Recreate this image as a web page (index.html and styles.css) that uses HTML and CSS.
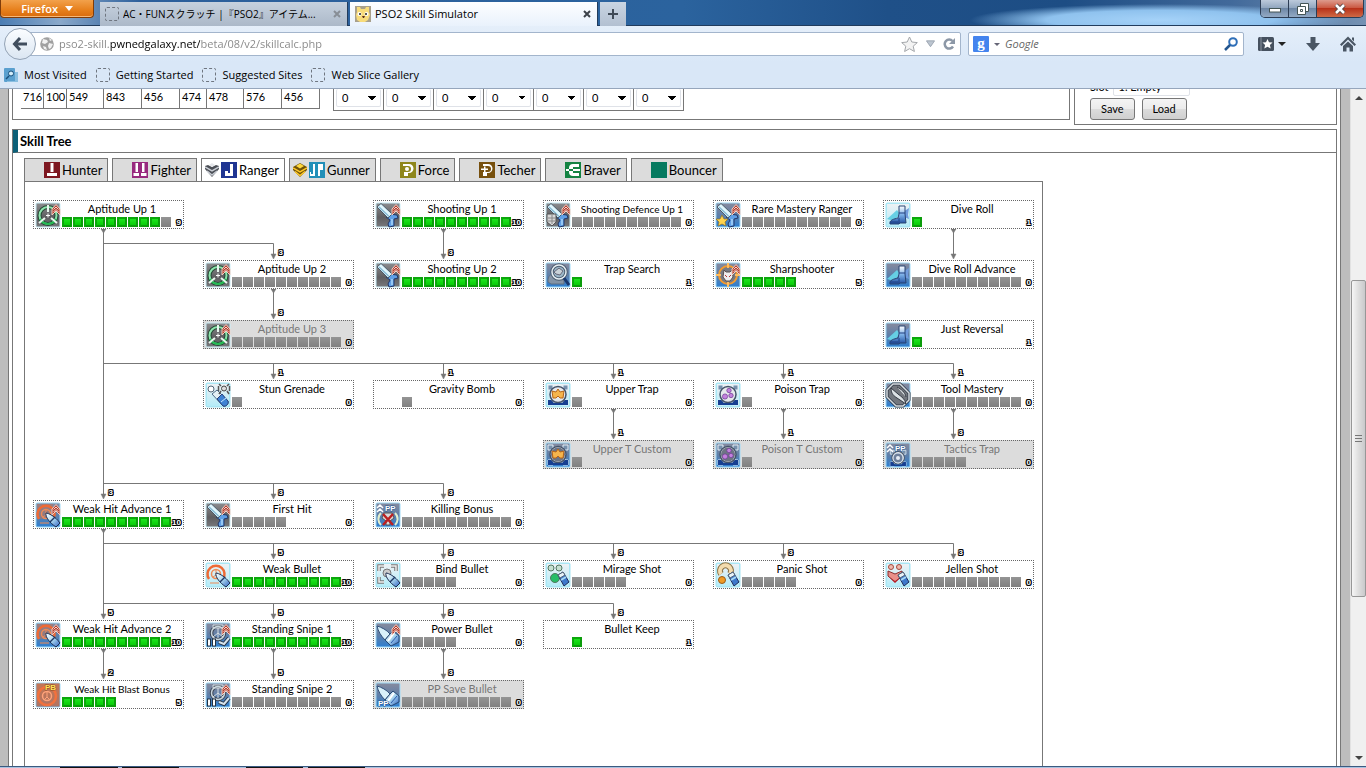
FILE: index.html
```html
<!DOCTYPE html>
<html lang="en">
<head>
<meta charset="utf-8">
<title>PSO2 Skill Simulator</title>
<link rel="stylesheet" href="styles.css">
</head>
<body>
<svg class="defs" aria-hidden="true">
  <defs>
    <linearGradient id="g-gray" x2="0" y2="1"><stop offset="0" stop-color="#8b8b8d"/><stop offset=".6" stop-color="#5d5d60"/><stop offset="1" stop-color="#77777a"/></linearGradient>
    <linearGradient id="g-blue" x2="0" y2="1"><stop offset="0" stop-color="#858a9e"/><stop offset=".5" stop-color="#5f7fa8"/><stop offset="1" stop-color="#2f7fd0"/></linearGradient>
    <linearGradient id="g-light" x2="0" y2="1"><stop offset="0" stop-color="#edf1f4"/><stop offset="1" stop-color="#b5ecf8"/></linearGradient>
    <linearGradient id="g-steel" x2="1" y2="1"><stop offset="0" stop-color="#fff"/><stop offset=".5" stop-color="#a9d6ee"/><stop offset="1" stop-color="#2a5cc0"/></linearGradient>
    <linearGradient id="g-boot" x2="0" y2="1"><stop offset="0" stop-color="#fff"/><stop offset=".5" stop-color="#79aee6"/><stop offset="1" stop-color="#1d4a9c"/></linearGradient>
    <g id="bg-gray"><rect x=".5" y=".5" width="25" height="25" rx="2" fill="#c9eef8"/><rect x="1.500" y="1.500" width="23" height="23" fill="url(#g-gray)"/></g>
    <g id="bg-blue"><rect x=".5" y=".5" width="25" height="25" rx="2" fill="#a2dcf8"/><rect x="1.500" y="1.500" width="23" height="23" fill="url(#g-blue)"/></g>
    <g id="bg-light"><rect x=".5" y=".5" width="25" height="25" rx="2" fill="#a9e6f4"/><rect x="2" y="2" width="22" height="22" fill="url(#g-light)"/></g>
    <g id="chev"><path d="M17 7 21 2.500 25 7V13L21 9 17 13Z" fill="#b5402f" stroke="#f3cfc4" stroke-width="1"/><path d="M18.500 7.500 21 5l2.500 2.500M18.500 10 21 7.500l2.500 2.500" fill="none" stroke="#fff" stroke-width=".8"/></g>
    <g id="gun"><path d="M14 12 22 13 23 16 19 17 19 24 14 25 13 22 15 18 11 15Z" fill="#5f9fe6" stroke="#22386a"/><path d="M17 17v6" stroke="#a9d6fa" stroke-width="1.500"/><path d="M2 5 6 1.500 17 12 13 16Z" fill="#dff5fb" stroke="#4a5a68"/><path d="M4 5 14 14.500" stroke="#86b9d3" stroke-width="1.500"/></g>
    <g id="bullet"><path d="M11 11c2 0 9 3 14 10l-4 4C15 21 10 15 11 11Z" fill="url(#g-steel)" stroke="#1d2f52"/><path d="m15 20 5-5" stroke="#1e3966" stroke-width="1.500"/></g>
    <g id="target" fill="none"><path d="M4 17a8.500 8.500 0 1 1 14 0" stroke="#ee6a35" stroke-width="2.500"/><circle cx="11" cy="12" r="4.500" stroke="#f08a55" stroke-width="1.500"/><path d="M11 8v5l-3 2m3-2 3 2M5 21h9" stroke="#f08a55"/></g>
    <g id="shell"><path d="m13 13 5-3 6 10-5 4Z" fill="#3d78cb" stroke="#1d2b5a"/><path d="m13 13 5-3 2 3-5 3Z" fill="#e8f3f8" stroke="#567"/><path d="m16 18 5-3" stroke="#a5d9f5" stroke-width="2"/></g>
    <g id="boot"><path d="m2 17 10-9 3 4-6 7Z" fill="#66cfe4"/><path d="M18 10l6-4-1 7 1 4-5-2Z" fill="#719bdd"/><path d="M14 4h6v8l1 9h-6l-1 1H5c-1-4 4-5 8-6l1-4Z" fill="url(#g-boot)" stroke="#294473"/><path d="M14 11h6M14 16v5M5 20h8" stroke="#1e3f83"/></g>
    <g id="trap"><path d="M3 3h5v3h10V3h5v5h-3v10h3v5h-5v-3H8v3H3v-5h3V8H3Z" fill="#7790ac" stroke="#e2eef6"/><path d="M3 18h3l3 3h8l3-3h3v5H3Z" fill="#173f91"/><circle cx="13" cy="12.500" r="8" fill="#e5e8eb" stroke="#45546a" stroke-width="1.500"/></g>
    <g id="star"><path d="m13 7 2 3 4-1-1 7h-3l-2-2-2 2H8L7 9l4 1Z" fill="#f5b54d" stroke="#b76518"/></g>
    <g id="bubbles" fill="#c381dd" stroke="#6b3b92" stroke-width=".7"><circle cx="14" cy="8.500" r="2.200"/><circle cx="10" cy="14.500" r="2.600"/><circle cx="16" cy="13.500" r="2.200"/></g>
    <g id="snipe" fill="none"><circle cx="13" cy="11" r="6.500" stroke="#3c4553" stroke-width="3.500"/><circle cx="13" cy="11" r="6.500" stroke="#c7d5dd" stroke-width="1.500"/><path d="M8 3h10v3H8ZM13 6v10M8 15l5-4 5 4" stroke="#d6dfe4"/><path d="m14 20 5 2 5-6" stroke="#263447" stroke-width="4"/><path d="m14 20 5 2 5-6" stroke="#d6e3ec" stroke-width="2"/><rect x="2.500" y="17" width="3" height="7" fill="#fff" stroke="#234"/><rect x="7.500" y="17" width="3" height="7" fill="#fff" stroke="#234"/></g>
    <g id="rounds"><path d="M2 4c4 1 10 4 13 8l-5 6C6 14 3 9 2 4Z" fill="#d9f1fa" stroke="#32527b"/><path d="m10 18 5-6 3-3 6 5v6l-8 4Z" fill="url(#g-steel)" stroke="#284974"/><path d="m13 19 6-8" fill="none" stroke="#fff" stroke-width="2"/><path d="m16 21 6-7" stroke="#2a5cae"/></g>

    <symbol id="i-apt" viewBox="0 0 26 26"><use href="#bg-gray"/><circle cx="13" cy="13.500" r="8.500" fill="none" stroke="#254a35" stroke-width="4"/><circle cx="13" cy="13.500" r="8.500" fill="none" stroke="#8de5ad" stroke-width="2"/><path d="M5 17a9 9 0 0 0 16 0" fill="none" stroke="#23b852" stroke-width="2"/><path d="M13 3v7M4 21l6-5m12 5-6-5" stroke="#e9f7ee" stroke-width="2"/><path d="M11 13.500h4m-2-2v4" stroke="#fff"/><use href="#chev"/></symbol>
    <symbol id="i-gun" viewBox="0 0 26 26"><use href="#bg-gray"/><use href="#gun"/><use href="#chev"/></symbol>
    <symbol id="i-def" viewBox="0 0 26 26"><use href="#bg-gray"/><use href="#gun"/><use href="#chev"/><path d="M2 12h9v8l-4 4-5-4Z" fill="#d7d7d7" stroke="#555"/><path d="M3 16h8m-8 3h8M7 13v9" stroke="#888"/></symbol>
    <symbol id="i-rare" viewBox="0 0 26 26"><use href="#bg-blue"/><use href="#gun"/><use href="#chev"/><path d="m7 13 2 4h4l-3 3 1 4-4-2-4 2 1-4-3-3h4Z" fill="#ffd34d" stroke="#8c7328" stroke-width=".7"/></symbol>
    <symbol id="i-search" viewBox="0 0 26 26"><use href="#bg-blue"/><path d="M3 20c-1-9 8-11 16-9v11H6Z" fill="#8393a5" stroke="#5d6e83"/><circle cx="14" cy="10" r="7" fill="#9bb7c8" stroke="#4c5e70" stroke-width="3.500"/><circle cx="14" cy="10" r="7" fill="none" stroke="#e6eef2" stroke-width="1.500"/><path d="M9 10l5-4 4 3-3 4-4-1Z" fill="#c9d3d9" stroke="#667"/><path d="m19 16 5 7" stroke="#19386e" stroke-width="3"/></symbol>
    <symbol id="i-sharp" viewBox="0 0 26 26"><use href="#bg-blue"/><circle cx="13" cy="13" r="9" fill="#777a83" stroke="#f39a2d" stroke-width="2"/><path d="M13 1v5m0 14v5M1 13h5m14 0h5" stroke="#ffbd5e" stroke-width="2"/><path d="m9 8 2 2h4l2-2 1 7-3 4h-4l-3-4Z" fill="#eee" stroke="#5b514e"/><path d="m10 13 2 2m4-2-2 2" stroke="#b33"/><use href="#chev"/></symbol>
    <symbol id="i-roll" viewBox="0 0 26 26"><use href="#bg-light"/><use href="#boot"/></symbol>
    <symbol id="i-boot" viewBox="0 0 26 26"><use href="#bg-blue"/><use href="#boot"/></symbol>
    <symbol id="i-stun" viewBox="0 0 26 26"><use href="#bg-light"/><circle cx="6" cy="7" r="3" fill="#fff" stroke="#567"/><path d="m7 12 5-4 11 11c1 3-2 6-5 5Z" fill="#e4f0f5" stroke="#4e6b88"/><path d="m12 17 5-5 6 7c1 3-2 6-5 5Z" fill="#3f83d4" stroke="#2b427c"/><path d="m16 20 5-4" stroke="#c9eaff"/><circle cx="19" cy="6.500" r="2.500" fill="#ddd" stroke="#444"/><path d="m14 2 2 2m8-2-2 2m-8 8 2-3m8 3-2-3M13.500 4v5m11-5v5" stroke="#555" stroke-width="1.500"/></symbol>
    <symbol id="i-trap" viewBox="0 0 26 26"><use href="#bg-light"/><use href="#trap"/><use href="#star"/></symbol>
    <symbol id="i-trapc" viewBox="0 0 26 26"><use href="#bg-blue"/><use href="#trap"/><circle cx="13" cy="12.500" r="7" fill="#6d7484"/><use href="#star"/></symbol>
    <symbol id="i-poi" viewBox="0 0 26 26"><use href="#bg-light"/><use href="#trap"/><use href="#bubbles"/></symbol>
    <symbol id="i-poic" viewBox="0 0 26 26"><use href="#bg-blue"/><use href="#trap"/><circle cx="13" cy="12.500" r="7" fill="#6d7484"/><use href="#bubbles"/></symbol>
    <symbol id="i-tool" viewBox="0 0 26 26"><use href="#bg-blue"/><path d="M8 2 2 8v7l9 9h7l6-6v-7l-9-9Z" fill="#73777e" stroke="#2f3742" stroke-width="3"/><path d="M8 2 2 8v7l9 9h7l6-6v-7l-9-9Z" fill="none" stroke="#d6dde2" stroke-width="1.500"/><path d="M6 6c0 6 3 8 6 10l9 6c-1-5-4-7-8-10ZM12 5c4 2 8 5 9 10" fill="#dde2e5" stroke="#343a44"/></symbol>
    <symbol id="i-tac" viewBox="0 0 26 26"><use href="#bg-blue"/><use href="#trap" transform="translate(3 6) scale(.78)"/><circle cx="13" cy="16" r="5" fill="#6d7f9b" stroke="#dce9f4"/><circle cx="13" cy="16" r="2" fill="#e5edf5"/><path d="M2 6 5 3l3 3M2 10l3-3 3 3" fill="none" stroke="#fff" stroke-width="1.500"/><text x="10" y="9" class="ico-text">PP</text></symbol>
    <symbol id="i-weak" viewBox="0 0 26 26"><use href="#bg-blue"/><rect x="2" y="2" width="16" height="15" fill="#b8735f" opacity=".5"/><use href="#target"/><use href="#bullet"/><use href="#chev"/></symbol>
    <symbol id="i-kill" viewBox="0 0 26 26"><use href="#bg-blue"/><path d="M6 11c-4 4-3 9 0 12M20 11c4 4 3 9 0 12" fill="none" stroke="#e2efce" stroke-width="2"/><path d="M9 11h8l2 5-4 3v4h-4v-4l-4-3Z" fill="#d9d9d9" stroke="#555"/><path d="m8 12 10 11m0-11L8 23" stroke="#bd2020" stroke-width="2.500"/><path d="M2 6 5 3l3 3M2 10l3-3 3 3" fill="none" stroke="#fff" stroke-width="1.500"/><text x="10" y="9" class="ico-text">PP</text></symbol>
    <symbol id="i-wb" viewBox="0 0 26 26"><use href="#bg-light"/><use href="#target"/><use href="#bullet"/></symbol>
    <symbol id="i-bind" viewBox="0 0 26 26"><use href="#bg-light"/><path d="M4 9V4h5m7 0h5v5M4 15v5h5" fill="none" stroke="#777" stroke-width="3.500"/><path d="M4 9V4h5m7 0h5v5M4 15v5h5" fill="none" stroke="#eee" stroke-width="1.500"/><circle cx="12" cy="11" r="4" fill="#ccc" stroke="#777"/><use href="#bullet"/></symbol>
    <symbol id="i-mir" viewBox="0 0 26 26"><use href="#bg-light"/><g stroke="#527761"><circle cx="6" cy="6" r="3" fill="#c6dfd0"/><circle cx="14" cy="6" r="3" fill="#c6dfd0"/><circle cx="10" cy="16" r="4.500" fill="#27bd66"/></g><use href="#shell"/></symbol>
    <symbol id="i-pan" viewBox="0 0 26 26"><use href="#bg-light"/><path d="M6 12a5.500 5.500 0 1 1 9 0" fill="none" stroke="#8d7448" stroke-width="6"/><path d="M6 12a5.500 5.500 0 1 1 9 0" fill="none" stroke="#f3dcae" stroke-width="4"/><circle cx="7" cy="18" r="3.500" fill="#f09b25" stroke="#9a5b18"/><use href="#shell"/></symbol>
    <symbol id="i-jel" viewBox="0 0 26 26"><use href="#bg-light"/><circle cx="6" cy="5" r="2.500" fill="#f1b9ac" stroke="#a34a3f"/><circle cx="14" cy="5" r="2.500" fill="#f1b9ac" stroke="#a34a3f"/><path d="m3 9 7 3 7-3v5l-7 6-7-6Z" fill="#e98f89" stroke="#8a2f30"/><path d="m4 15 6 4 6-4-6 6Z" fill="#b51f2a"/><use href="#shell"/></symbol>
    <symbol id="i-snipe" viewBox="0 0 26 26"><use href="#bg-blue"/><use href="#snipe"/><use href="#chev"/></symbol>
    <symbol id="i-pow" viewBox="0 0 26 26"><use href="#bg-blue"/><use href="#rounds"/><use href="#chev"/></symbol>
    <symbol id="i-pps" viewBox="0 0 26 26"><use href="#bg-blue"/><use href="#rounds"/><text x="3" y="24" class="ico-text">PP</text></symbol>
    <symbol id="i-blast" viewBox="0 0 26 26"><use href="#bg-blue"/><rect x="1.500" y="1.500" width="23" height="23" fill="#d9703f" opacity=".75"/><circle cx="12" cy="14" r="9" fill="none" stroke="#f2713d" stroke-width="2.500"/><circle cx="12" cy="14" r="4.500" fill="none" stroke="#ffa37a" stroke-width="1.500"/><path d="M12 10v5m0 0-3 3m3-3 3 3" stroke="#ffa37a"/><text x="10" y="8" class="ico-text gold">PB</text></symbol>
  </defs>
</svg>

<header class="chrome">
  <div class="titlebar">
    <button class="firefox" type="button">Firefox <i class="tri"></i></button>
    <div class="btabs">
      <div class="btab">
        <i class="blank"></i><span class="btab-title cjk">AC・FUNスクラッチ |『PSO2』アイテム...</span>
        <button class="x" type="button" aria-label="Close tab"><svg viewBox="0 0 8 8"><path d="m1 1 6 6m0-6L1 7"/></svg></button>
      </div>
      <div class="btab active">
        <svg class="fav" viewBox="0 0 16 16"><rect width="16" height="16" fill="#a8a08c"/><path d="M2 1h3l1 2h4l1-2h3v5l1 3-2 5-3 2H5l-3-2-1-5 1-3Z" fill="#f8dc7b"/><circle cx="4.500" cy="8" r="2" fill="#fff"/><circle cx="11.500" cy="8" r="2" fill="#fff"/><circle cx="5" cy="8" r="1" fill="#222"/><circle cx="11" cy="8" r="1" fill="#222"/><path d="M7 10h3l-1 2H8Z" fill="#5b2d1a"/></svg>
        <span class="btab-title">PSO2 Skill Simulator</span>
        <button class="x" type="button" aria-label="Close tab"><svg viewBox="0 0 8 8"><path d="m1 1 6 6m0-6L1 7"/></svg></button>
      </div>
      <button class="newtab" type="button" aria-label="New tab"><svg viewBox="0 0 10 10"><path d="M5 0v10M0 5h10"/></svg></button>
    </div>
    <div class="winbtns">
      <button class="wb" type="button" aria-label="Minimize"><svg viewBox="0 0 14 14"><rect x="1.500" y="6.500" width="11" height="3.500" fill="#fff" stroke="#455"/></svg></button>
      <button class="wb" type="button" aria-label="Restore"><svg viewBox="0 0 14 14"><path d="M4.500 1.500h8v8h-8Z" fill="#fff" stroke="#455"/><path d="M1.500 4.500h8v8h-8ZM4.500 7.500h2v2h-2Z" fill="#fff" stroke="#455"/></svg></button>
      <button class="wb close" type="button" aria-label="Close"><svg viewBox="0 0 14 14"><path d="m3 3 8 8m0-8-8 8" stroke="#544" stroke-width="4.500"/><path d="m3 3 8 8m0-8-8 8" stroke="#fff" stroke-width="2.500"/></svg></button>
    </div>
  </div>
  <div class="navbar">
    <button class="back" type="button" aria-label="Back"><svg viewBox="0 0 16 16"><path d="M8 2 2.500 8 8 14M3 8h12" fill="none" stroke="#414e5e" stroke-width="3"/></svg></button>
    <div class="urlbar">
      <svg class="globe" viewBox="0 0 14 14"><circle cx="7" cy="7" r="6.800" fill="#a0a0a0"/><path d="M3 2l4 1 1 2-3 2-3-1ZM9 6l4 1-2 4-2 1-1-3ZM3 9l3 1 1 3-3-1ZM9 1l3 2-2 1Z" fill="#f1f1f1"/></svg>
      <input class="url" type="text" aria-label="Address" value="pso2-skill.pwnedgalaxy.net/beta/08/v2/skillcalc.php">
      <svg class="i17" viewBox="0 0 17 17"><path d="m8.500 1 2.300 5 5.500.6-4.100 3.600 1.200 5.300-4.900-2.800-4.900 2.800 1.200-5.300L.7 6.600l5.500-.6Z" fill="#f3f3f3" stroke="#a4a7ab"/></svg>
      <svg class="i9" viewBox="0 0 10 8"><path d="M.5.500h9L5 7Z" fill="#bcc5d0" stroke="#98a2ae"/></svg>
      <svg class="i12" viewBox="0 0 12 12"><path d="M9.500 3A4.500 4.500 0 1 0 10 8.500" fill="none" stroke="#8d98a7" stroke-width="2.500"/><path d="M12 0v6H6Z" fill="#8d98a7"/></svg>
    </div>
    <div class="search">
      <svg class="i16" viewBox="0 0 16 16"><rect width="16" height="16" rx="1" fill="#4484ee"/><text x="8" y="12" class="gletter">g</text></svg>
      <i class="tri small"></i>
      <input class="q" type="text" placeholder="Google" aria-label="Search">
      <svg class="i14" viewBox="0 0 14 14"><circle cx="9" cy="5" r="3.800" fill="none" stroke="#2f6fb8" stroke-width="2"/><path d="M6 8 1 13" stroke="#23568f" stroke-width="2.500"/></svg>
    </div>
    <div class="tools">
      <button type="button" aria-label="Bookmarks"><svg class="i16" viewBox="0 0 16 14"><rect width="16" height="14" rx="1.500" fill="#46515f"/><path d="M3 0v14" stroke="#8a94a0"/><path d="m9.500 2 1.500 3.200 3.500.4-2.600 2.400.8 3.500-3.200-1.800-3.200 1.800.8-3.500L4.500 5.600 8 5.200Z" fill="#fff"/></svg><i class="tri dark"></i></button>
      <button type="button" aria-label="Downloads"><svg class="i14" viewBox="0 0 14 14"><path d="M4.500 0h5v6H14l-7 8-7-8h4.500Z" fill="#4a5664"/></svg></button>
      <button type="button" aria-label="Home"><svg class="i16" viewBox="0 0 16 15"><path d="M0 8 8 0l8 8-1.500 1.500L8 3 1.500 9.500Z" fill="#4a5664"/><path d="M3 9.500 8 5l5 4.500V15H9.500v-4h-3v4H3ZM12 1h2v4l-2-2Z" fill="#4a5664"/></svg></button>
    </div>
  </div>
  <nav class="bookmarks">
    <a href="#"><svg class="i14" viewBox="0 0 14 14"><rect width="11" height="14" rx="1" fill="#5aa0cf"/><path d="M11 4h3v10H3v-1h8Z" fill="#8bbfe0"/><circle cx="7" cy="5.500" r="2.500" fill="#d3edfa" stroke="#184f7c"/><path d="m5 8-3 3" stroke="#184f7c" stroke-width="1.500"/></svg>Most Visited</a>
    <a href="#"><i class="blank"></i>Getting Started</a>
    <a href="#"><i class="blank"></i>Suggested Sites</a>
    <a href="#"><i class="blank"></i>Web Slice Gallery</a>
  </nav>
</header>

<div class="viewport">
  <main class="page">
    <div class="top">
      <section class="panel stats-panel">
        <table class="stats"><tr><td>716</td><td>100</td><td class="m">549</td><td class="l">843</td><td class="l">456</td><td class="s">474</td><td class="m">478</td><td class="l">576</td><td class="l">456</td></tr></table>
        <table class="picks"><tr>
          <td><select aria-label="Value 1"><option>0</option></select></td>
          <td><select aria-label="Value 2"><option>0</option></select></td>
          <td><select aria-label="Value 3"><option>0</option></select></td>
          <td><select aria-label="Value 4"><option>0</option></select></td>
          <td><select aria-label="Value 5"><option>0</option></select></td>
          <td><select aria-label="Value 6"><option>0</option></select></td>
          <td><select aria-label="Value 7"><option>0</option></select></td>
        </tr></table>
      </section>
      <section class="panel save-panel">
        <div class="slot"><label for="slot">Slot</label><select id="slot"><option>1. Empty</option></select></div>
        <div class="actions"><button type="button">Save</button><button type="button">Load</button></div>
      </section>
    </div>

    <section class="panel tree-panel">
      <h2>Skill Tree</h2>
      <div class="tree-body">
        <div class="tabs" role="tablist">
          <button role="tab" type="button"><i class="rank"></i><svg class="i16" viewBox="0 0 16 16"><rect width="16" height="16" fill="#7d1720"/><path d="M6.500 1h3v9h-3ZM3 11h10v3H3Z" fill="#fff"/></svg>Hunter</button>
          <button role="tab" type="button"><i class="rank"></i><svg class="i16" viewBox="0 0 16 16"><rect width="16" height="16" fill="#98297f"/><path d="M3.500 1H6v9H3.500ZM10 1h2.500v9H10ZM1.500 11h5.500v3H1.500ZM9 11h5.500v3H9Z" fill="#fff"/></svg>Fighter</button>
          <button role="tab" type="button" class="on" aria-selected="true"><svg class="rank" viewBox="0 0 14 14"><path d="M0 3 3 2l4 2 4-2 3 1v3l-7 8-7-8Z" fill="#4b4f56"/><path d="m4 2 3-2 3 2-3 2Z" fill="#e4e6ea"/><path d="M0 4l7 4 7-4M2 8l5 4 5-4" fill="none" stroke="#c9cdd4" stroke-width="1.500"/></svg><svg class="i16" viewBox="0 0 16 16"><rect width="16" height="16" fill="#1f3592"/><path d="M9 2h3v12H4v-5h3v2h2Z" fill="#fff"/></svg>Ranger</button>
          <button role="tab" type="button"><svg class="rank" viewBox="0 0 14 14"><path d="M0 4 7 0l7 4v3l-7 7-7-7Z" fill="#6f5208"/><path d="m3 3 4-2.500L11 3 7 5.500Z" fill="#ffd83d"/><path d="M0 5l7 4 7-4M2 8.500l5 4 5-4" fill="none" stroke="#ffc928" stroke-width="1.500"/></svg><svg class="i16" viewBox="0 0 16 16"><rect width="16" height="16" fill="#228fb8"/><path d="M4 2h2v12H1v-4h1v2h2ZM9 2h5v6h-3v6H9Z" fill="#fff"/></svg>Gunner</button>
          <button role="tab" type="button"><i class="rank"></i><svg class="i16" viewBox="0 0 16 16"><rect width="16" height="16" fill="#8f861b"/><path d="M3 2h6a4.500 4.500 0 0 1 0 9H8v3H4v-4h4a3 3 0 0 0 0-6H3Z" fill="#fff"/><circle cx="7" cy="7" r="2" fill="#fff"/></svg>Force</button>
          <button role="tab" type="button"><i class="rank"></i><svg class="i16" viewBox="0 0 16 16"><rect width="16" height="16" fill="#77500e"/><path d="M4 2h5a4.500 4.500 0 0 1 0 9H8v3H4v-4h5a3 3 0 0 0 0-6H4ZM2 6.500h7v1.500H2ZM5 4.500h1.500V10H5Z" fill="#fff"/></svg>Techer</button>
          <button role="tab" type="button"><i class="rank"></i><svg class="i16" viewBox="0 0 16 16"><rect width="16" height="16" fill="#148342"/><path d="M14 2H8a4 4 0 0 0-4 4v4a4 4 0 0 0 4 4h6v-3H8V5h6ZM1 7h14v2H1Z" fill="#fff"/></svg>Braver</button>
          <button role="tab" type="button"><i class="rank"></i><svg class="i16" viewBox="0 0 16 16"><rect width="16" height="16" fill="#067a60"/></svg>Bouncer</button>
        </div>

        <div class="tree">
          <div class="nodes">
            <svg class="links" width="1001" height="509" aria-hidden="true">
              <path d="M70.500 29V298M70.500 43.500H240.500V58M240.500 89V118M410.500 29V58M920.500 29V58M70.500 163.500H920.500V178M240.500 163V178M410.500 163V178M580.500 163V178M750.500 163V178M580.500 209V238M750.500 209V238M920.500 209V238M70.500 283.500H410.500V298M240.500 283V298M70.500 329V418M70.500 343.500H920.500V358M240.500 343V358M410.500 343V358M580.500 343V358M750.500 343V358M70.500 403.500H580.500V418M240.500 403V418M410.500 403V418M70.500 449V478M240.500 449V478M410.500 449V478" fill="none" stroke="#777"/>
              <path d="M68 29h5l-2.500 4ZM238 89h5l-2.500 4ZM408 29h5l-2.500 4ZM918 29h5l-2.500 4ZM578 209h5l-2.500 4ZM748 209h5l-2.500 4ZM918 209h5l-2.500 4ZM68 329h5l-2.500 4ZM68 449h5l-2.500 4ZM238 449h5l-2.500 4ZM408 449h5l-2.500 4ZM238 54h5l-2.500 5ZM238 114h5l-2.500 5ZM408 54h5l-2.500 5ZM918 54h5l-2.500 5ZM238 174h5l-2.500 5ZM408 174h5l-2.500 5ZM578 174h5l-2.500 5ZM748 174h5l-2.500 5ZM918 174h5l-2.500 5ZM578 234h5l-2.500 5ZM748 234h5l-2.500 5ZM918 234h5l-2.500 5ZM68 294h5l-2.500 5ZM238 294h5l-2.500 5ZM408 294h5l-2.500 5ZM238 354h5l-2.500 5ZM408 354h5l-2.500 5ZM578 354h5l-2.500 5ZM748 354h5l-2.500 5ZM918 354h5l-2.500 5ZM68 414h5l-2.500 5ZM238 414h5l-2.500 5ZM408 414h5l-2.500 5ZM578 414h5l-2.500 5ZM68 474h5l-2.500 5ZM238 474h5l-2.500 5ZM408 474h5l-2.500 5Z" fill="#777" stroke="#777" stroke-width=".5"/>
            </svg>

            <div class="skill c1 r1"><svg><use href="#i-apt"/></svg><b>Aptitude Up 1</b><i class="pips on n9"></i><i class="pips n1"></i><em>9</em></div>
            <div class="skill c3 r1"><svg><use href="#i-gun"/></svg><b>Shooting Up 1</b><i class="pips on n10"></i><em>10</em></div>
            <div class="skill c4 r1"><svg><use href="#i-def"/></svg><b class="long">Shooting Defence Up 1</b><i class="pips n10"></i><em>0</em></div>
            <div class="skill c5 r1"><svg><use href="#i-rare"/></svg><b>Rare Mastery Ranger</b><i class="pips n10"></i><em>0</em></div>
            <div class="skill c6 r1"><svg><use href="#i-roll"/></svg><b>Dive Roll</b><i class="pips on n1"></i><em>1</em></div>

            <div class="skill c2 r2"><span class="req">3</span><svg><use href="#i-apt"/></svg><b>Aptitude Up 2</b><i class="pips n10"></i><em>0</em></div>
            <div class="skill c3 r2"><span class="req">3</span><svg><use href="#i-gun"/></svg><b>Shooting Up 2</b><i class="pips on n10"></i><em>10</em></div>
            <div class="skill c4 r2"><svg><use href="#i-search"/></svg><b>Trap Search</b><i class="pips on n1"></i><em>1</em></div>
            <div class="skill c5 r2"><svg><use href="#i-sharp"/></svg><b>Sharpshooter</b><i class="pips on n5"></i><em>5</em></div>
            <div class="skill c6 r2"><svg><use href="#i-boot"/></svg><b>Dive Roll Advance</b><i class="pips n10"></i><em>0</em></div>

            <div class="skill off c2 r3"><span class="req">3</span><svg><use href="#i-apt"/></svg><b>Aptitude Up 3</b><i class="pips n10"></i><em>0</em></div>
            <div class="skill c6 r3"><svg><use href="#i-boot"/></svg><b>Just Reversal</b><i class="pips on n1"></i><em>1</em></div>

            <div class="skill c2 r4"><span class="req">1</span><svg><use href="#i-stun"/></svg><b>Stun Grenade</b><i class="pips n1"></i><em>0</em></div>
            <div class="skill c3 r4"><span class="req">1</span><b>Gravity Bomb</b><i class="pips n1"></i><em>0</em></div>
            <div class="skill c4 r4"><span class="req">1</span><svg><use href="#i-trap"/></svg><b>Upper Trap</b><i class="pips n1"></i><em>0</em></div>
            <div class="skill c5 r4"><span class="req">1</span><svg><use href="#i-poi"/></svg><b>Poison Trap</b><i class="pips n1"></i><em>0</em></div>
            <div class="skill c6 r4"><span class="req">1</span><svg><use href="#i-tool"/></svg><b>Tool Mastery</b><i class="pips n10"></i><em>0</em></div>

            <div class="skill off c4 r5"><span class="req">1</span><svg><use href="#i-trapc"/></svg><b>Upper T Custom</b><i class="pips n1"></i><em>0</em></div>
            <div class="skill off c5 r5"><span class="req">1</span><svg><use href="#i-poic"/></svg><b>Poison T Custom</b><i class="pips n1"></i><em>0</em></div>
            <div class="skill off c6 r5"><span class="req">3</span><svg><use href="#i-tac"/></svg><b>Tactics Trap</b><i class="pips n5"></i><em>0</em></div>

            <div class="skill c1 r6"><span class="req">3</span><svg><use href="#i-weak"/></svg><b>Weak Hit Advance 1</b><i class="pips on n10"></i><em>10</em></div>
            <div class="skill c2 r6"><span class="req">3</span><svg><use href="#i-gun"/></svg><b>First Hit</b><i class="pips n5"></i><em>0</em></div>
            <div class="skill c3 r6"><span class="req">3</span><svg><use href="#i-kill"/></svg><b>Killing Bonus</b><i class="pips n10"></i><em>0</em></div>

            <div class="skill c2 r7"><span class="req">5</span><svg><use href="#i-wb"/></svg><b>Weak Bullet</b><i class="pips on n10"></i><em>10</em></div>
            <div class="skill c3 r7"><span class="req">3</span><svg><use href="#i-bind"/></svg><b>Bind Bullet</b><i class="pips n5"></i><em>0</em></div>
            <div class="skill c4 r7"><span class="req">3</span><svg><use href="#i-mir"/></svg><b>Mirage Shot</b><i class="pips n5"></i><em>0</em></div>
            <div class="skill c5 r7"><span class="req">3</span><svg><use href="#i-pan"/></svg><b>Panic Shot</b><i class="pips n5"></i><em>0</em></div>
            <div class="skill c6 r7"><span class="req">3</span><svg><use href="#i-jel"/></svg><b>Jellen Shot</b><i class="pips n10"></i><em>0</em></div>

            <div class="skill c1 r8"><span class="req">5</span><svg><use href="#i-weak"/></svg><b>Weak Hit Advance 2</b><i class="pips on n10"></i><em>10</em></div>
            <div class="skill c2 r8"><span class="req">5</span><svg><use href="#i-snipe"/></svg><b>Standing Snipe 1</b><i class="pips on n10"></i><em>10</em></div>
            <div class="skill c3 r8"><span class="req">3</span><svg><use href="#i-pow"/></svg><b>Power Bullet</b><i class="pips n5"></i><em>0</em></div>
            <div class="skill c4 r8"><span class="req">3</span><b>Bullet Keep</b><i class="pips on n1"></i><em>1</em></div>

            <div class="skill c1 r9"><span class="req">2</span><svg><use href="#i-blast"/></svg><b class="long">Weak Hit Blast Bonus</b><i class="pips on n5"></i><em>5</em></div>
            <div class="skill c2 r9"><span class="req">5</span><svg><use href="#i-snipe"/></svg><b>Standing Snipe 2</b><i class="pips n10"></i><em>0</em></div>
            <div class="skill off c3 r9"><span class="req">3</span><svg><use href="#i-pps"/></svg><b>PP Save Bullet</b><i class="pips n10"></i><em>0</em></div>
          </div>
        </div>
      </div>
    </section>
  </main>
  <div class="scrollbar" aria-hidden="true">
    <i class="sb-arrow up"></i><i class="sb-before"></i><i class="sb-thumb"></i><i class="sb-after"></i><i class="sb-arrow"></i>
  </div>
</div>
<footer class="edge"></footer>
</body>
</html>
```
FILE: styles.css
```css
* { box-sizing: border-box; }
body {
  margin: 0;
  height: 100vh;
  display: flex;
  flex-direction: column;
  overflow: hidden;
  font: 11px/16px "Open Sans", "Noto Sans CJK JP", sans-serif;
  color: #000;
}
button, input, select { font: inherit; color: inherit; margin: 0; padding: 0; border: 0; background: none; }
.defs { position: absolute; width: 0; height: 0; }
svg { display: block; flex: none; }
.i9 { width: 9px; height: 8px; }
.i12 { width: 12px; height: 12px; }
.i14 { width: 14px; height: 14px; }
.i16 { width: 16px; height: 16px; }
.i17 { width: 17px; height: 17px; }
.tri { display: inline-block; border: 4px solid transparent; border-top: 5px solid #fff; border-bottom: 0; }
.tri.small { border-width: 3px; border-top: 3px solid #667; border-bottom: 0; }
.tri.dark { border-top: 4px solid #222; }
.blank { width: 14px; height: 14px; border: 1px dashed #6f7680; border-radius: 2px; flex: none; }

/* Browser window */
.titlebar {
  height: 26px;
  display: flex;
  align-items: flex-start;
  background:
    radial-gradient(ellipse 190px 16px at 1160px 20px, #a5d2f8, #8fc2ee 60%, transparent),
    linear-gradient(90deg, #4b7db3, #8aa9cb 60px, #2c5f9b 140px, #2b639e 50%, #1f5088 65%, #1d4d84 78%, #41699a 90%, #7592b3);
  border-bottom: 1px solid #213c5d;
}
.firefox {
  width: 94px;
  height: 18px;
  margin-right: 6px;
  border: 1px solid #7f3c0a;
  border-top: 0;
  border-radius: 0 0 4px 4px;
  background: linear-gradient(#f2a14b, #e67f1b 60%, #d96b0d);
  box-shadow: inset 0 -1px #f6b878;
  color: #fff;
  font-weight: 600;
  line-height: 16px;
}
.firefox .tri { margin: 0 0 2px 4px; }
.btabs { display: flex; gap: 2px; padding-top: 2px; flex: 1; }
.btab {
  width: 248px;
  height: 24px;
  padding: 0 6px 0 5px;
  display: flex;
  align-items: center;
  gap: 4px;
  background: linear-gradient(#c6d1de, #acb9c9);
  border-right: 1px solid #223c5c;
}
.btab.active { background: linear-gradient(#fdfeff, #e9f2fc); }
.btab-title { flex: 1; white-space: nowrap; overflow: hidden; }
.cjk { font-size: 10px; }
.fav { width: 16px; height: 16px; }
.x svg { width: 8px; height: 8px; }
.x path { stroke: #888e96; stroke-width: 2; }
.active .x path { stroke: #3c4249; }
.newtab { width: 26px; height: 24px; display: grid; place-items: center; background: linear-gradient(#c9d5e3, #b3c0d1); }
.newtab svg { width: 10px; height: 10px; }
.newtab path { stroke: #3f4a57; stroke-width: 2; }
.winbtns { display: flex; height: 18px; margin-right: 2px; border: 1px solid #2c3d55; border-top: 0; border-radius: 0 0 5px 5px; overflow: hidden; }
.wb { width: 28px; display: grid; place-items: center; border-right: 1px solid #2c3d55; background: linear-gradient(#bccadb, #92a7c0 45%, #6e87a6 50%, #93aac4); }
.wb svg { width: 14px; height: 14px; }
.wb.close { width: 46px; border: 0; background: linear-gradient(#dd9b8d, #cb5a43 45%, #b8321a 50%, #cf6a45); }

.chrome { background: linear-gradient(#edf4fc, #d9e7f7 62px); flex: none; border-bottom: 1px solid #96a6bc; }
.navbar { height: 36px; display: flex; align-items: center; padding-left: 4px; }
.back {
  width: 32px;
  height: 32px;
  border: 1px solid #94a3b5;
  border-radius: 50%;
  background: linear-gradient(#fbfdff, #dbe6f2);
  display: grid;
  place-items: center;
  z-index: 1;
}
.back svg { width: 16px; height: 16px; }
.urlbar, .search { height: 24px; display: flex; align-items: center; border: 1px solid #a3b5cc; background: #fff; border-radius: 2px; }
.urlbar { flex: 1; margin-left: -10px; padding: 0 5px 0 13px; gap: 8px; }
.globe { width: 14px; height: 14px; margin-right: -3px; }
.url {
  flex: 1;
  min-width: 0;
  outline: 0;
  background: linear-gradient(90deg, #858585 51px, #000 51px, #000 141px, #858585 141px);
  -webkit-background-clip: text;
  background-clip: text;
  -webkit-text-fill-color: transparent;
}
.search { width: 276px; margin-left: 7px; padding: 0 5px 0 4px; gap: 5px; }
.gletter { font: bold 15px "Liberation Serif", serif; fill: #fff; text-anchor: middle; }
.q { flex: 1; min-width: 0; outline: 0; }
.q::placeholder { color: #666; font-style: italic; opacity: 1; }
.tools { display: flex; align-items: center; gap: 20px; padding: 0 10px 0 14px; }
.tools button { display: flex; align-items: center; gap: 4px; }
.bookmarks { height: 26px; display: flex; align-items: center; gap: 9px; padding: 0 4px; }
.bookmarks a { display: flex; align-items: center; gap: 6px; color: #000; text-decoration: none; }

/* Page */
.viewport { flex: 1; min-height: 0; display: flex; background: #bdbdbd; }
.page {
  flex: 1;
  min-width: 0;
  margin: 0 9px 0 8px;
  padding: 0 3px;
  border: solid #777;
  border-width: 0 1px;
  background: #fff;
  display: flex;
  flex-direction: column;
  overflow: hidden;
  font-family: Lato, sans-serif;
}
.panel { border: 1px solid #777; }
.top { display: flex; gap: 4px; align-items: flex-start; height: 40px; flex: none; }
.stats-panel { flex: 1; height: 31px; border-top: 0; padding-left: 8px; display: flex; align-items: flex-start; gap: 13px; }
table { border-collapse: separate; border-spacing: 0; }
.stats td { width: 23px; height: 20px; padding: 0 0 4px 2px; border: solid #777; border-width: 0 1px 1px 0; line-height: 15px; }
.stats td.s { width: 27px; }
.stats td.m { width: 37px; }
.stats td.l { width: 38px; }
.picks { border-left: 1px solid #777; }
.picks td { width: 50px; height: 22px; padding: 0 2px 3px; border: solid #777; border-width: 0 1px 1px 0; }
select {
  appearance: none;
  display: block;
  border: 1px solid #dfe2e8;
  border-radius: 2px;
  background:
    linear-gradient(45deg, transparent 50%, #000 50%) right 8px center / 4px 4px no-repeat,
    linear-gradient(-45deg, transparent 50%, #000 50%) right 4px center / 4px 4px no-repeat,
    #fff;
}
.picks select { width: 45px; height: 18px; padding-left: 5px; border-top: 0; line-height: 16px; }
.save-panel { width: 263px; height: 36px; border-top: 0; padding-left: 15px; overflow: hidden; }
.slot { display: flex; gap: 4px; align-items: center; margin-top: -13px; height: 20px; }
.slot select { width: 77px; height: 20px; padding: 2px 0 0 5px; }
.slot label { padding-top: 2px; }
.actions { display: flex; gap: 7px; padding-top: 2px; }
.actions button {
  height: 22px;
  padding: 0 10px;
  border: 1px solid #777;
  border-radius: 3px;
  background: linear-gradient(#f4f4f4, #ebebeb 50%, #dcdcdc 50%, #cfcfcf);
}
.tree-panel { flex: 1; min-height: 0; display: flex; flex-direction: column; border-bottom: 0; }
h2 { margin: 0; padding-left: 2px; height: 23px; border-left: 5px solid #0c6078; border-bottom: 1px solid #777; font-size: 13px; line-height: 22px; font-weight: 700; flex: none; }
.tree-body { flex: 1; min-height: 0; padding: 5px 11px 0; display: flex; flex-direction: column; align-items: flex-start; }
.tabs { display: flex; gap: 4px; }
.tabs button {
  height: 23px;
  padding: 0 5px 0 3px;
  border: 1px solid #777;
  border-bottom: 0;
  background: #dcdcdc;
  display: flex;
  align-items: center;
  gap: 2px;
  font-size: 13px;
}
.tabs button.on { background: #fff; }
.rank { width: 14px; height: 14px; }
.tree { flex: 1; min-height: 0; border: 1px solid #777; border-bottom: 0; padding: 18px 8px 0; overflow: hidden; }
.nodes { position: relative; display: grid; grid-template-columns: repeat(6, 151px); grid-template-rows: repeat(9, 29px); gap: 31px 19px; }
.links { position: absolute; top: 0; left: 0; }
.c1 { grid-column: 1; } .c2 { grid-column: 2; } .c3 { grid-column: 3; }
.c4 { grid-column: 4; } .c5 { grid-column: 5; } .c6 { grid-column: 6; }
.r1 { grid-row: 1; } .r2 { grid-row: 2; } .r3 { grid-row: 3; }
.r4 { grid-row: 4; } .r5 { grid-row: 5; } .r6 { grid-row: 6; }
.r7 { grid-row: 7; } .r8 { grid-row: 8; } .r9 { grid-row: 9; }
.skill {
  position: relative;
  border: 1px dotted #666;
  padding-left: 28px;
  display: flex;
  flex-wrap: wrap;
  align-content: flex-start;
  background: #fff;
}
.skill > svg { position: absolute; top: 1px; left: 1px; width: 26px; height: 26px; }
.skill b { width: 120px; text-align: center; font-weight: 400; line-height: 16px; white-space: nowrap; }
.skill b.long { font-size: 10px; }
.skill.off { background: #dcdcdc; }
.skill.off b { color: #777; }
.pips {
  height: 10px;
  width: 11px;
  background: linear-gradient(90deg, transparent 10px, #fff 10px) 0 0 / 11px 10px, linear-gradient(#949494, #808080);
}
.off .pips { background: linear-gradient(90deg, transparent 10px, #dcdcdc 10px) 0 0 / 11px 10px, linear-gradient(#949494, #808080); }
.pips.on {
  background:
    linear-gradient(90deg, #0ca80c 2px, transparent 2px 8px, #0b9c0b 8px 10px, #fff 10px) 0 0 / 11px 10px,
    linear-gradient(#0ca80c 2px, #1de41d 2px, #08cc08 8px, #0b9c0b 8px) 0 0 / 11px 10px;
}
.n5 { width: 55px; }
.n9 { width: 99px; }
.n10 { width: 110px; }
.skill em, .req {
  font: bold 8px/10px "Liberation Sans", sans-serif;
  color: #fff;
  text-shadow: 1px 0 #000, -1px 0 #000, 0 1px #000, 0 -1px #000, 1px 1px #000, -1px -1px #000, 1px -1px #000, -1px 1px #000;
}
.skill em { position: absolute; right: 2px; top: 17px; }
.req { position: absolute; right: 70px; top: -13px; }
.ico-text { font: bold 8px "Liberation Sans", sans-serif; fill: #fff; stroke: #2a5a90; stroke-width: 1px; paint-order: stroke; }
.ico-text.gold { fill: #ffe25b; stroke: #8a4a20; }

.scrollbar { width: 16px; display: flex; flex-direction: column; background: #f0f0f0; border-left: 1px solid #e2e2e2; }
.sb-arrow { height: 17px; display: grid; place-items: center; flex: none; }
.sb-arrow::after { content: ""; border: 4px solid transparent; border-top-color: #444; border-bottom: 0; }
.sb-arrow.up::after { border: 4px solid transparent; border-bottom-color: #444; border-top: 0; }
.sb-before { flex: 175; }
.sb-thumb { flex: 316; border: 1px solid #979797; border-radius: 2px; background: repeating-linear-gradient(#777 0 1px, transparent 1px 3px) center / 7px 8px no-repeat, linear-gradient(90deg, #f6f6f6, #dedede 50%, #c9c9cb); }
.sb-after { flex: 152; }
.edge { height: 2px; flex: none; border-top: 1px solid #3b5a80; background: linear-gradient(90deg, #a9c3e0 60px, #111 60px 118px, #a9c3e0 118px 122px, #111 122px 179px, #a9c3e0 179px 246px, #111 246px 303px, #a9c3e0 303px 308px, #111 308px 365px, #a9c3e0 365px); }
```
